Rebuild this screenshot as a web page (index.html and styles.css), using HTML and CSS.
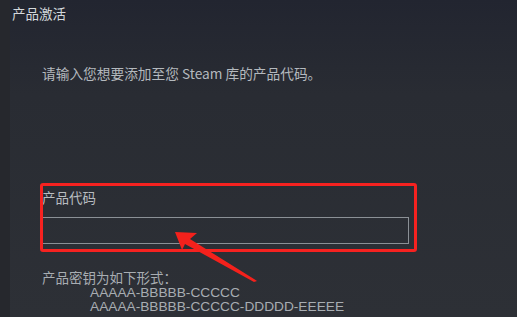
FILE: index.html
```html
<!DOCTYPE html>
<html lang="zh-CN">
<head>
    <meta charset="UTF-8">
    <title>产品激活</title>
    <link rel="stylesheet" href="styles.css">
</head>
<body>
    <div class="dialog">
        <h1 class="title">产品激活</h1>
        <div class="content">
            <p class="intro">请输入您想要添加至您 Steam 库的产品代码。</p>
            <div class="field">
                <label class="field-label">产品代码</label>
                <input type="text" class="code-input">
            </div>
            <div class="formats">
                <p>产品密钥为如下形式：</p>
                <span>AAAAA-BBBBB-CCCCC</span>
                <span>AAAAA-BBBBB-CCCCC-DDDDD-EEEEE</span>
            </div>
        </div>

        <!-- annotation -->
        <div class="highlight"></div>
        <svg class="arrow" width="517" height="317" viewBox="0 0 517 317">
            <polygon points="175,232 197,233 190,239 257,281 254,282 185,244 182,250" fill="#f4211c"/>
        </svg>
    </div>
</body>
</html>
```

FILE: styles.css
```css
* {
    margin: 0;
    padding: 0;
    box-sizing: border-box;
}

body {
    font-family: 'Noto Sans CJK SC', 'Noto Sans', sans-serif;
    background: #2b2e34;
    overflow: hidden;
}

.dialog {
    position: relative;
    width: 517px;
    height: 317px;
    background: linear-gradient(to bottom, #222530 0%, #292c33 30%, #2d3036 100%);
    border-left: 10px solid #26282d;
}

.title {
    font-size: 13.5px;
    font-weight: 400;
    line-height: 20px;
    color: #d4d8dc;
    padding: 3px 0 0 2px;
}

.content {
    padding-left: 32px;
}

.intro {
    font-size: 13.7px;
    line-height: 20px;
    color: #b4b9be;
    margin-top: 40px;
}

.field {
    margin-top: 104px;
}

.field-label {
    display: block;
    font-size: 13.5px;
    line-height: 20px;
    color: #b8bcc0;
}

.code-input {
    display: block;
    width: 367px;
    height: 27px;
    margin-top: 10px;
    background: transparent;
    border: 1px solid #8b9096;
    outline: none;
}

.formats {
    margin-top: 24px;
    color: #a8adb2;
}

.formats p {
    font-size: 13.5px;
    line-height: 18px;
}

.formats span {
    display: block;
    font-family: 'Liberation Sans', Arial, sans-serif;
    font-size: 13.7px;
    line-height: 14px;
    padding-left: 48px;
}

.highlight {
    position: absolute;
    left: 30px;
    top: 183px;
    width: 377px;
    height: 69px;
    border: 3px solid #f62220;
    border-radius: 3px;
}

.arrow {
    position: absolute;
    left: -10px;
    top: 0;
}
```
